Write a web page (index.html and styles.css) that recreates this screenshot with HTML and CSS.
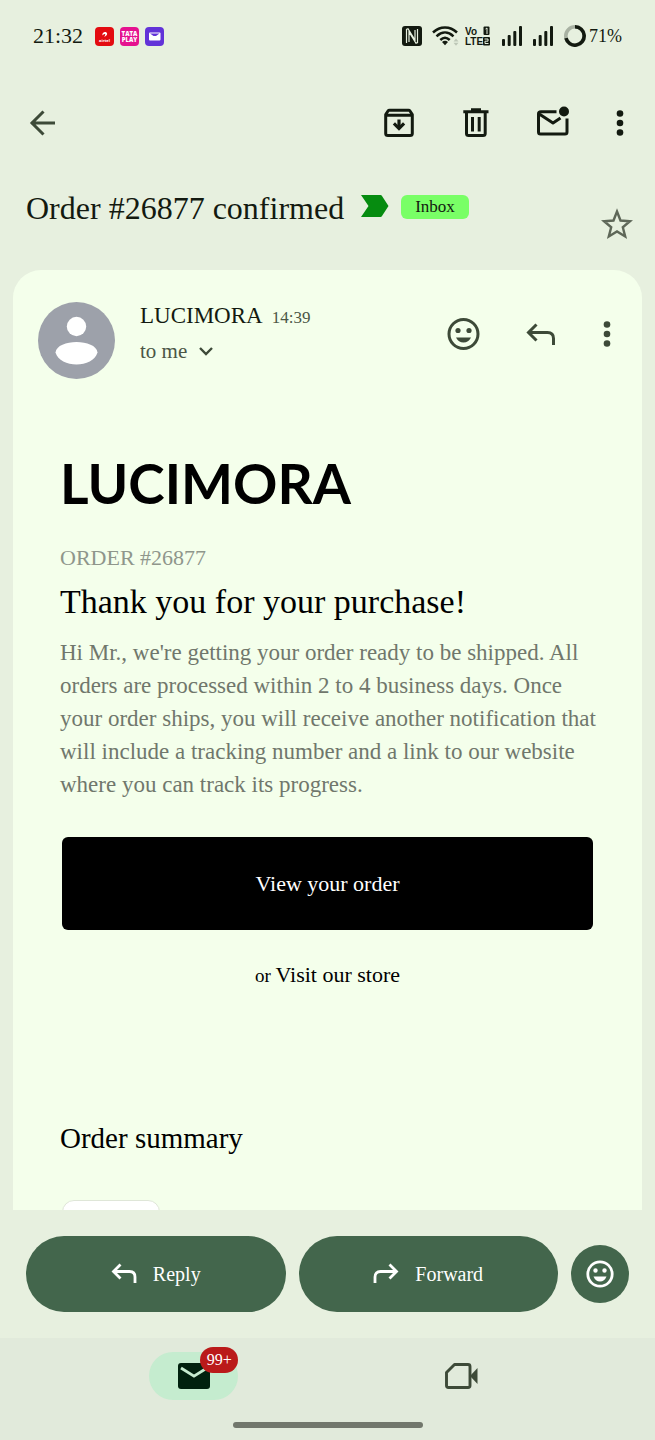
FILE: index.html
```html
<!DOCTYPE html>
<html lang="en">
<head>
<meta charset="utf-8">
<meta name="viewport" content="width=device-width, initial-scale=1">
<title>Order #26877 confirmed</title>
<link rel="stylesheet" href="styles.css">
</head>
<body>
<div class="status">
  <span class="clock">21:32</span>
  <div class="apps">
    <svg width="19" height="19" viewBox="0 0 19 19"><rect width="19" height="19" rx="4" fill="#e30b10"/><path d="M7.500 8.500C6.500 5.500 11 3.800 12 6.300c.6 2-1.700 3.400-3 3.200 1-.5 1.800-1.700 1-2.400-.8-.6-1.700.3-2.500 1.400z" fill="#fff"/><text x="9.500" y="15" text-anchor="middle" class="airtel">airtel</text></svg>
    <svg width="19" height="19" viewBox="0 0 19 19"><rect width="19" height="19" rx="4" fill="#e5128f"/><text x="9.500" y="9" text-anchor="middle" class="tata">TATA</text><text x="9.500" y="15" text-anchor="middle" class="tata">PLAY</text></svg>
    <svg width="19" height="19" viewBox="0 0 19 19"><rect width="19" height="19" rx="4" fill="#6233d8"/><rect x="4" y="5.500" width="11.500" height="8" rx="1" fill="#fff"/><path d="M5 6.500h9.500L11 9H8.500z" fill="#6233d8"/></svg>
  </div>
  <div class="signals">
    <svg width="20" height="20" viewBox="0 0 20 20"><rect width="20" height="20" rx="3" fill="#131a10"/><path d="M4.500 17V3.500L6 2.800 13 14V4M15.500 3v13.500L14 17.200 7 6v10" fill="none" stroke="#e7f0df" stroke-width="1.200"/></svg>
    <svg class="gap-wifi" width="27" height="20" viewBox="0 0 27 20"><g fill="none" stroke="#131a10" stroke-width="2.500"><path d="M1 6.500C8-.3 18-.3 25 6.500"/><path d="M4.500 10.300c5.300-5 11.700-5 17 0"/><path d="M8.300 14c3-2.800 6.400-2.800 9.400 0"/></g><path d="M10 16c2-1.600 4-1.600 6 0l-3 3.300z" fill="#131a10"/><path d="m21.500 15.500 2.500-3 2.500 3zM21.500 16.800l2.500 3 2.500-3z" fill="#bdc7b7"/></svg>
    <svg class="gap-lte" width="26" height="24" viewBox="0 0 26 24"><text x="0" y="11" class="lte">Vo</text><text x="0" y="21" class="lte">LTE</text><rect x="18.500" y="2.500" width="6" height="8.500" rx="1" fill="#131a10"/><path d="M20.500 5l1.500-1v6" fill="none" stroke="#e7f0df"/><rect x="18" y="13" width="7" height="8.500" rx="1" fill="#131a10"/><path d="M19.500 15h3.500v2.200H20v2.300h3.500" fill="none" stroke="#e7f0df"/></svg>
    <svg class="gap-bars" width="20" height="20" viewBox="0 0 20 20" fill="#131a10"><rect x="0" y="13" width="3" height="7" rx="1"/><rect x="5.700" y="9" width="3" height="11" rx="1"/><rect x="11.300" y="5" width="3" height="15" rx="1"/><rect x="17" y="0" width="3" height="20" rx="1"/></svg>
    <svg class="gap-bars" width="20" height="20" viewBox="0 0 20 20" fill="#131a10"><rect x="0" y="13" width="3" height="7" rx="1"/><rect x="5.700" y="9" width="3" height="11" rx="1"/><rect x="11.300" y="5" width="3" height="15" rx="1"/><rect x="17" y="0" width="3" height="20" rx="1"/></svg>
    <svg class="gap-bars" width="22" height="22" viewBox="0 0 22 22" fill="none" stroke-width="3.600"><circle cx="11" cy="11" r="9.200" stroke="#a9b2a3"/><path d="M11 1.800a9.200 9.200 0 1 1-9 11.300" stroke="#131a10"/></svg>
    <span class="battery">71%</span>
  </div>
</div>

<header class="toolbar">
  <button class="icon" aria-label="Back"><svg width="34" height="38" viewBox="0 0 34 38" fill="none" stroke="#3d4a38" stroke-width="3"><path d="M30 19H6M18.500 7.500 7 19l11.500 11.500"/></svg></button>
  <div class="tools">
    <button class="icon" aria-label="Archive"><svg width="38" height="38" viewBox="0 0 38 38" fill="none" stroke="#131a10" stroke-width="3"><path d="M5.700 10.500 8 7Q8.500 6.300 9.500 6.300H28.500Q29.500 6.300 30 7l2.300 3.500V29.500Q32.300 31.600 30 31.600H8Q5.700 31.600 5.700 29.500zM5.500 11.300H32.500" stroke-linejoin="round"/><path d="M19 15.500v8" stroke-width="3.200"/><path d="M12.800 20.500 15 18.300l4 4 4-4 2.200 2.200-6.200 6.200z" fill="#131a10" stroke="none"/></svg></button>
    <button class="icon" aria-label="Delete"><svg width="38" height="38" viewBox="0 0 38 38" fill="none" stroke="#131a10" stroke-width="3"><path d="M6.300 7.700H31.500M14 5.800H24M9.500 8V29.500Q9.500 31.600 11.700 31.600H26Q28.200 31.600 28.200 29.500V8M15.500 13v14.500M22.200 13v14.500"/></svg></button>
    <button class="icon" aria-label="Mark as unread"><svg width="38" height="38" viewBox="0 0 38 38" fill="none" stroke="#131a10" stroke-width="3"><path d="M22.500 7.700H7Q4.500 7.700 4.500 9.700V28Q4.500 30 6.500 30H31Q33 30 33 28V14.500M4.500 9.500 19 19 26.500 14" stroke-linejoin="round"/><circle cx="30" cy="7.500" r="5" fill="#131a10" stroke="none"/></svg></button>
    <button class="icon" aria-label="More options"><svg width="18" height="38" viewBox="0 0 18 38" fill="#131a10"><circle cx="9" cy="9.500" r="3.300"/><circle cx="9" cy="19" r="3.300"/><circle cx="9" cy="28.500" r="3.300"/></svg></button>
  </div>
</header>

<section class="subject">
  <h1>Order #26877 confirmed</h1>
  <svg class="important" width="28" height="22" viewBox="0 0 28 22"><path d="M0 0H19.500Q20.500 0 21 1L27.500 11 21 21Q20.500 22 19.500 22H0L7.500 11z" fill="#068c10"/></svg>
  <span class="label">Inbox</span>
  <button class="icon star" aria-label="Star"><svg width="32" height="36" viewBox="0 0 32 36"><path d="M16 5.500 19.500 14.500 29 15.200 21.800 21.300 24.200 30.500 16 25.500 7.800 30.500 10.200 21.300 3 15.200 12.500 14.500z" fill="none" stroke="#5e6758" stroke-width="2.400"/></svg></button>
</section>

<main class="card">
  <div class="sender">
    <svg class="avatar" width="77" height="77" viewBox="0 0 77 77"><circle cx="38.500" cy="38.500" r="38.500" fill="#9da1aa"/><circle cx="38.500" cy="24.500" r="9.700" fill="#fff"/><path d="M17.500 50.500C19 36.500 58 36.500 59.500 50.500 55 66.500 22 66.500 17.500 50.500z" fill="#fff"/></svg>
    <div class="who">
      <div class="from"><span class="name">LUCIMORA</span><time>14:39</time></div>
      <button class="to">to me <svg width="16" height="12" viewBox="0 0 16 12" fill="none" stroke="#3d4a38" stroke-width="2.400"><path d="m2 3 6 6 6-6"/></svg></button>
    </div>
    <div class="sender-tools">
      <button class="icon" aria-label="Add reaction"><svg width="38" height="38" viewBox="0 0 38 38"><circle cx="19.500" cy="19" r="14.500" fill="none" stroke="#3d4a38" stroke-width="3"/><circle cx="14" cy="15.500" r="2.600" fill="#3d4a38"/><circle cx="25" cy="15.500" r="2.600" fill="#3d4a38"/><path d="M12 22.500h15Q24.500 27.500 19.500 27.500T12 22.500z" fill="#3d4a38"/></svg></button>
      <button class="icon" aria-label="Reply"><svg width="38" height="38" viewBox="0 0 38 38" fill="none" stroke="#3d4a38" stroke-width="3"><path d="M7 17.500H26.500Q32.500 17.500 32.500 23.500V30M15.500 9.500 7.500 17.500 15.500 25.500"/></svg></button>
      <button class="icon" aria-label="Message options"><svg width="18" height="38" viewBox="0 0 18 38" fill="#3d4a38"><circle cx="9" cy="9.500" r="3.300"/><circle cx="9" cy="19" r="3.300"/><circle cx="9" cy="28.500" r="3.300"/></svg></button>
    </div>
  </div>
  <article class="mail">
    <div class="brand">LUCIMORA</div>
    <p class="order-no">ORDER #26877</p>
    <h2>Thank you for your purchase!</h2>
    <p class="text">Hi Mr., we're getting your order ready to be shipped. All orders are processed within 2 to 4 business days. Once your order ships, you will receive another notification that will include a tracking number and a link to our website where you can track its progress.</p>
    <a class="view" href="#order">View your order</a>
    <p class="visit">or <a href="#store">Visit our store</a></p>
    <h3 id="order">Order summary</h3>
    <div class="thumb-clip"><div class="thumb"></div></div>
  </article>
</main>

<div class="actions">
  <button class="pill"><svg width="26" height="24" viewBox="0 0 26 24" fill="none" stroke="#fff" stroke-width="2.800"><path d="M2.500 9.500H18.500Q24 9.500 24 15v6M9.500 2.500 2.500 9.500l7 7"/></svg>Reply</button>
  <button class="pill"><svg width="26" height="24" viewBox="0 0 26 24" fill="none" stroke="#fff" stroke-width="2.800"><path d="M23.500 9.500H7.500Q2 9.500 2 15v6M16.500 2.500 23.500 9.500l-7 7"/></svg>Forward</button>
  <button class="react" aria-label="React"><svg width="28" height="28" viewBox="0 0 28 28"><circle cx="14" cy="14" r="12.200" fill="none" stroke="#fff" stroke-width="2.800"/><circle cx="9.500" cy="10.500" r="2.200" fill="#fff"/><circle cx="18.500" cy="10.500" r="2.200" fill="#fff"/><path d="M7.500 16.500h13Q18.500 21.500 14 21.500T7.500 16.500z" fill="#fff"/></svg></button>
</div>

<nav class="bottom">
  <div class="tabs">
    <a class="tab" href="#mail" aria-label="Mail"><span class="active"><svg width="32" height="26" viewBox="0 0 32 26"><rect width="32" height="26" rx="3" fill="#00210e"/><path d="M3 5 16 13.200 29 5" fill="none" stroke="#c5eccf" stroke-width="2.800"/></svg><span class="badge">99+</span></span></a>
    <a class="tab" href="#meet" aria-label="Meet"><svg width="33" height="26" viewBox="0 0 33 26"><path d="M9.500 1.500H23Q25 1.500 25 3.500V22.500Q25 24.500 23 24.500H3.500Q1.500 24.500 1.500 22.500V9.500z" fill="none" stroke="#3d4a38" stroke-width="2.900" stroke-linejoin="round"/><path d="M25 13 32.500 5V21z" fill="#3d4a38"/></svg></a>
  </div>
  <div class="gesture"></div>
</nav>
</body>
</html>
```

FILE: styles.css
```css
* { box-sizing: border-box; }
body {
  margin: 0;
  min-height: 100vh;
  display: flex;
  flex-direction: column;
  background: #e7f0df;
  color: #131a10;
  font-family: "Liberation Serif", "Times New Roman", serif;
}
h1, h2, h3, p { margin: 0; font-weight: 400; }
svg { display: block; flex: none; }
a { color: inherit; text-decoration: none; }
button { font: inherit; color: inherit; background: none; border: 0; padding: 0; cursor: pointer; }
.icon { flex: none; }

.status { display: flex; align-items: center; height: 72px; padding: 0 33px; }
.clock { font-size: 22px; }
.apps { display: flex; gap: 6px; margin-left: 12px; }
.airtel { font: 700 4px "Open Sans", sans-serif; fill: #fff; }
.tata { font: 800 6px "Open Sans", sans-serif; fill: #fff; }
.signals { display: flex; align-items: center; margin-left: auto; }
.gap-wifi { margin-left: 10px; }
.gap-lte { margin-left: 6px; }
.gap-bars { margin-left: 11px; }
.lte { font: 700 10px "Liberation Sans", sans-serif; fill: #131a10; }
.battery { font-size: 18px; margin-left: 3px; }

.toolbar { display: flex; align-items: center; justify-content: space-between; height: 102px; padding: 0 26px 0 25px; }
.tools { display: flex; gap: 39px; }

.subject { display: flex; align-items: flex-start; padding: 18px 22px 28px 26px; }
.subject h1 { font-size: 32px; line-height: 32px; }
.important { margin: 3px 12px 0 17px; }
.label { margin-top: 3px; padding: 0 14px; border-radius: 6px; background: #79ff66; font-size: 17px; line-height: 24px; }
.star { margin-left: auto; margin-top: 14px; }

.card { flex: 1; margin: 0 13px; padding-top: 32px; border-radius: 28px 28px 0 0; background: #f4ffeb; }
.sender { display: flex; padding: 0 26px 0 25px; }
.who { margin-left: 25px; }
.from { display: flex; align-items: baseline; gap: 9px; line-height: 28px; }
.name { font-size: 23px; }
.from time { font-size: 17px; color: #4b5646; }
.to { display: flex; align-items: center; gap: 11px; margin-top: 6px; font-size: 21px; line-height: 26px; color: #4b5646; }
.sender-tools { display: flex; gap: 39px; margin: 13px 0 0 auto; height: 38px; }

.mail { padding: 74px 39px 0 47px; color: #000; }
.brand { font-family: Lato, sans-serif; font-weight: 700; font-size: 55px; line-height: 60px; }
.order-no { margin-top: 32px; font-size: 22px; line-height: 26px; color: #8f968b; }
.mail h2 { margin-top: 11px; font-size: 34px; line-height: 40px; }
.text { margin-top: 14px; font-size: 23px; line-height: 33px; color: #70776c; }
.view { display: block; margin: 36px 10px 0 2px; border-radius: 6px; background: #000; color: #fff; font-size: 22px; line-height: 93px; text-align: center; }
.visit { margin: 30px 10px 0 2px; font-size: 19px; line-height: 30px; text-align: center; }
.visit a { font-size: 22px; }
.mail h3 { margin-top: 131px; font-size: 29px; line-height: 32px; }
.thumb-clip { height: 10px; margin-top: 46px; overflow: hidden; }
.thumb { width: 98px; height: 98px; margin-left: 2px; border: 1px solid #dfe6d8; border-radius: 12px; background: #fff; }

.actions { display: flex; align-items: center; gap: 13px; padding: 26px; }
.pill { flex: 1; display: flex; align-items: center; justify-content: center; gap: 16px; height: 76px; border-radius: 38px; background: #43664c; color: #fff; font-size: 20px; }
.react { display: flex; align-items: center; justify-content: center; width: 58px; height: 58px; border-radius: 50%; background: #43664c; }

.bottom { padding: 14px 60px 12px; background: #e1eadb; }
.tabs { display: flex; }
.tab { flex: 1; display: flex; align-items: center; justify-content: center; height: 48px; }
.active { position: relative; display: flex; align-items: center; justify-content: center; width: 89px; height: 48px; border-radius: 24px; background: #c5eccf; }
.badge { position: absolute; top: -5px; right: 0; width: 38px; border-radius: 13px; background: #ba1a1a; color: #fff; font-size: 16px; line-height: 26px; text-align: center; }
.gesture { width: 190px; height: 6px; margin: 22px auto 0; border-radius: 3px; background: #71776c; }
```
